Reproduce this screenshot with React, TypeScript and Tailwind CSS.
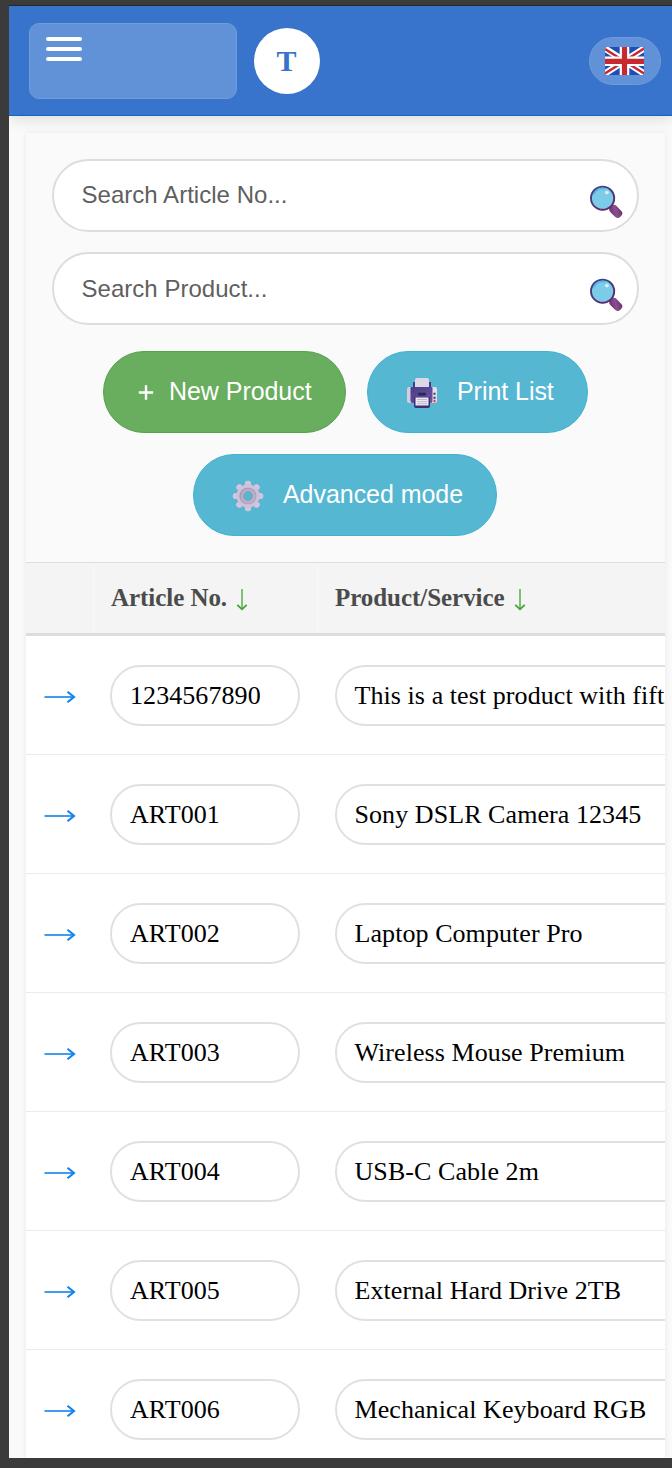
import React from "react";

const products = [
  { article: "1234567890", name: "This is a test product with fift" },
  { article: "ART001", name: "Sony DSLR Camera 12345" },
  { article: "ART002", name: "Laptop Computer Pro" },
  { article: "ART003", name: "Wireless Mouse Premium" },
  { article: "ART004", name: "USB-C Cable 2m" },
  { article: "ART005", name: "External Hard Drive 2TB" },
  { article: "ART006", name: "Mechanical Keyboard RGB" },
];

function UkFlag() {
  return (
    <svg width="39" height="28" viewBox="0 0 39 28">
      <defs>
        <clipPath id="flag">
          <rect width="39" height="28" rx="1.5" />
        </clipPath>
      </defs>
      <g clipPath="url(#flag)">
        <rect width="39" height="28" fill="#1f4fb5" />
        <path d="M0 1.500L39 26.500M39 1.500L0 26.500" stroke="#fff" strokeWidth="6.4" />
        <path d="M0 2L15 11.500M39 1.500L24 11M0 26.500L15 17M24 17L39 26.500" stroke="#c8282d" strokeWidth="2.4" />
        <path d="M19.5 0V28M0 14.300H39" stroke="#fff" strokeWidth="9.6" />
        <path d="M19.5 0V28M0 14.3H39" stroke="#c62a30" strokeWidth="5.2" />
      </g>
    </svg>
  );
}

function Magnifier() {
  return (
    <svg width="34" height="34" viewBox="0 0 34 34">
      <defs>
        <linearGradient id="rim" x1="0" y1="0" x2="0.6" y2="1">
          <stop offset="0" stopColor="#33478c" />
          <stop offset="1" stopColor="#5d2a6c" />
        </linearGradient>
        <linearGradient id="handle" x1="0" y1="1" x2="1" y2="0">
          <stop offset="0" stopColor="#633064" />
          <stop offset="0.5" stopColor="#8d4d93" />
          <stop offset="1" stopColor="#5e315e" />
        </linearGradient>
      </defs>
      <path d="M20.5 21.5l3 3" stroke="#47265a" strokeWidth="4" />
      <rect x="20" y="23.2" width="14" height="8.600" rx="3.8" transform="rotate(45 27 27.2)" fill="url(#handle)" />
      <circle cx="13.6" cy="14.2" r="11.6" fill="#7ccbe8" stroke="url(#rim)" strokeWidth="1.9" />
      <path d="M4.7 10.400A10 10 0 0 1 16.400 4.8" fill="none" stroke="#55b5e6" strokeWidth="1.4" />
      <ellipse cx="17.9" cy="8.600" rx="2" ry="1.8" fill="#d4f0fb" />
    </svg>
  );
}

function Printer() {
  return (
    <svg width="32" height="32" viewBox="0 0 32 32">
      <defs>
        <linearGradient id="printerBody" x1="0" y1="0" x2="1" y2="1">
          <stop offset="0" stopColor="#4b3f83" />
          <stop offset="1" stopColor="#6853a8" />
        </linearGradient>
      </defs>
      <rect x="1" y="10" width="6" height="16" rx="2" fill="#d8cbdc" />
      <rect x="25" y="10" width="6" height="16" rx="2" fill="#e6deec" />
      <path d="M7 5h18v8H7z" fill="#4a3a86" />
      <path d="M9 3q0-2 2-2h10q2 0 2 2v7H9z" fill="#dcd8e5" />
      <path d="M4.500 11q0-1 1-1h20q1 0 1 1v12q0 3-2 3h-18q-2 0-2-3z" fill="url(#printerBody)" />
      <rect x="12" y="15.800" width="8" height="2.600" rx="1" fill="#2e264f" />
      <path d="M8 20h16v9q0 2-2 2H10q-2 0-2-2z" fill="#402e6f" />
      <path d="M9.500 20.500h13v8H9.500z" fill="#ede9f3" />
      <path d="M11 22.500h10M11 24.600h10M11 26.700h10" stroke="#b9b2c7" strokeWidth=".9" />
      <path d="M28.500 15.800v2M28.500 19.700v2" stroke="#433263" strokeWidth="2" />
      <rect x="27.500" y="22.800" width="2" height="2.500" fill="#e82f59" />
    </svg>
  );
}

function Gear() {
  return (
    <svg width="32" height="32" viewBox="0 0 32 32">
      <defs>
        <linearGradient id="gearRing" x1="0" y1="0" x2="1" y2="1">
          <stop offset="0" stopColor="#9f97a8" />
          <stop offset="1" stopColor="#b7a9c7" />
        </linearGradient>
      </defs>
      <g fill="#d2c5df">
        <rect x="12.900" y="0.700" width="6.200" height="30.600" rx="2.800" />
        <rect x="0.700" y="12.900" width="30.600" height="6.200" rx="2.800" />
        <rect x="12.900" y="0.700" width="6.200" height="30.600" rx="2.800" transform="rotate(45 16 16)" />
        <rect x="0.700" y="12.900" width="30.600" height="6.200" rx="2.800" transform="rotate(45 16 16)" />
      </g>
      <circle cx="16" cy="16" r="11.500" fill="#cfc1dc" />
      <circle cx="16" cy="16" r="7.800" fill="#bfb2cb" stroke="url(#gearRing)" strokeWidth="1.600" />
      <circle cx="16" cy="16" r="4.600" fill="#55b7d1" stroke="#8f96ad" strokeWidth=".8" />
    </svg>
  );
}

function SortHeader({ label }: { label: string }) {
  return (
    <div className="flex items-center gap-[9px] whitespace-nowrap">
      <span>{label}</span>
      <svg width="12" height="24" viewBox="0 0 12 24" className="mt-[4px]" fill="none" stroke="#42a532">
        <path d="M6 1V21" strokeWidth="1.3" />
        <path d="M1.300 16.800L6 21.300L10.700 16.800" strokeWidth="1.800" />
      </svg>
    </div>
  );
}

function SearchField({ placeholder, inputClass }: { placeholder: string; inputClass: string }) {
  return (
    <label className="relative block h-[73px]">
      <input
        placeholder={placeholder}
        className={`h-full w-full rounded-full border-2 border-[#dddddd] bg-white pr-16 pl-[27.5px] text-[24px] tracking-[0.03px] outline-none placeholder:text-[#5f5f5f] ${inputClass}`}
      />
      <span className="absolute top-[25px] right-[16px]">
        <Magnifier />
      </span>
    </label>
  );
}

const actionButton =
  "flex h-[82px] items-center rounded-full border pb-px text-[25px] leading-none text-white whitespace-nowrap";

export default function App() {
  return (
    <div className="h-[1468px] w-[672px] overflow-hidden bg-[#3b3b3b] pt-[5px] pl-[9px] font-['Liberation_Sans',Arial,sans-serif]">
      <div className="flex h-[1453px] flex-col overflow-hidden border-t border-[#202734] bg-[#fafafa]">
        <header className="relative z-10 flex h-[110px] shrink-0 items-center border-b border-[#1861c4] bg-[#3873cc] pr-[11px] pl-[20px] shadow-[0_3px_14px_rgba(0,0,0,0.12)]">
          <button className="flex h-[76px] w-[208px] flex-col gap-[6px] rounded-[10px] border border-[#6f9ddd] bg-[#6191d7] pt-[13px] pl-[16px]">
            <span className="h-[4px] w-[36px] rounded-full bg-white" />
            <span className="h-[4px] w-[36px] rounded-full bg-white" />
            <span className="h-[4px] w-[36px] rounded-full bg-white" />
          </button>
          <div className="ml-[17px] flex size-[66px] items-center justify-center rounded-full bg-white pr-px pb-px font-['Liberation_Serif',serif] text-[30px] font-bold text-[#3873cc]">
            T
          </div>
          <button className="ml-auto flex h-[48px] w-[72px] items-center justify-center rounded-full border border-[#6e9bdc] bg-[#6191d7] pr-px">
            <UkFlag />
          </button>
        </header>

        <main className="mt-[17px] ml-[17px] flex w-[639px] grow flex-col overflow-hidden bg-[#fafafa] shadow-[0_0_6px_rgba(0,0,0,0.08)]">
          <section className="h-[429px] shrink-0 pt-[26px] pr-[26px] pl-[26px]">
            <div className="flex flex-col gap-[20px]">
              <SearchField placeholder="Search Article No..." inputClass="pb-px" />
              <SearchField placeholder="Search Product..." inputClass="pt-px" />
            </div>
            <div className="mt-[26px] flex gap-[21px] pl-[51px]">
              <button className={`${actionButton} w-[243px] border-[#55a34b] bg-[#69ad5e] pl-[34px]`}>
                <svg width="16" height="16" viewBox="0 0 16 16" className="mt-[2px] mr-[15px]">
                  <path d="M8 .3V14.700M.8 7.500H15.200" stroke="#fff" strokeWidth="2.400" />
                </svg>
                <span className="tracking-[-0.05px]">New Product</span>
              </button>
              <button className={`${actionButton} w-[221px] border-[#41b3ce] bg-[#55b7d2] pl-[38px]`}>
                <span className="mt-[3px]">
                  <Printer />
                </span>
                <span className="ml-[19px] tracking-[-0.05px]">Print List</span>
              </button>
            </div>
            <div className="mt-[21px] flex justify-center">
              <button className={`${actionButton} -ml-px w-[304px] border-[#41b3ce] bg-[#55b7d2] pl-[38px]`}>
                <span className="mt-[3px]">
                  <Gear />
                </span>
                <span className="ml-[19px] tracking-[-0.05px]">Advanced mode</span>
              </button>
            </div>
          </section>

          <section className="w-[850px] grow bg-white font-['Liberation_Serif','Times_New_Roman',serif]">
            <div className="grid h-[74px] grid-cols-[68px_224px_1fr] items-stretch border-t border-b-[3px] border-t-[#dddddd] border-b-[#dddddd] bg-[#f4f4f4] text-[25px] font-bold tracking-[-0.05px] text-[#4b4b4b]">
              <div className="border-r border-[#f8f8f8]" />
              <div className="flex border-r border-[#f8f8f8] pl-[17px]">
                <SortHeader label="Article No." />
              </div>
              <div className="flex pl-[17px]">
                <SortHeader label="Product/Service" />
              </div>
            </div>
            {products.map((product) => (
              <div
                key={product.article}
                className="grid h-[119px] grid-cols-[84px_190px_1fr] items-center border-b border-[#ebebeb] pt-px text-[26px] tracking-[0.07px] text-black"
              >
                <svg width="32" height="14" viewBox="0 0 32 14" className="mt-[3px] ml-[18px]" fill="none" stroke="#1183ee">
                  <path d="M.5 7H30" strokeWidth="1.600" />
                  <path d="M23.500 1.800L30 7L23.500 12.200" strokeWidth="2.100" />
                </svg>
                <div className="flex h-[61px] items-center rounded-full border-2 border-[#e0e0e0] pl-[18px]">
                  {product.article}
                </div>
                <div className="ml-[35px] flex h-[61px] items-center rounded-full border-2 border-[#e0e0e0] pl-[17.5px] whitespace-nowrap">
                  {product.name}
                </div>
              </div>
            ))}
          </section>
        </main>
      </div>
    </div>
  );
}
